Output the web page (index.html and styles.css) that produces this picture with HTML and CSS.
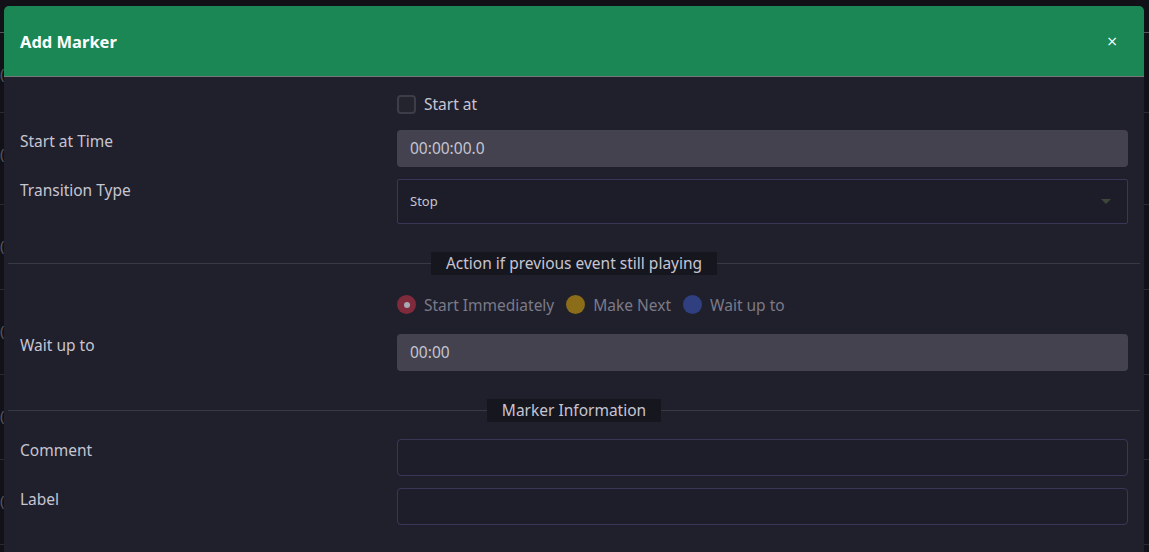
FILE: index.html
```html
<!DOCTYPE html>
<html lang="en">
<head>
<meta charset="utf-8">
<title>Add Marker</title>
<link rel="stylesheet" href="styles.css">
</head>
<body>
<div class="backdrop">
  <div class="bd-row bd-head"></div>
  <div class="bd-row"><span class="paren">(</span></div>
  <div class="bd-row tall"><span class="paren">(</span></div>
  <div class="bd-row"><span class="paren">(</span></div>
  <div class="bd-row"><span class="paren">(</span></div>
  <div class="bd-row"><span class="paren">(</span></div>
  <div class="bd-row"><span class="paren">(</span></div>
</div>

<div class="modal">
  <div class="modal-header">
    <h1 class="modal-title">Add Marker</h1>
    <button class="close">&times;</button>
  </div>
  <div class="modal-body">
    <div class="row row-check">
      <div></div>
      <label class="check"><span class="checkbox"></span><span>Start at</span></label>
    </div>
    <div class="row">
      <div class="label">Start at Time</div>
      <div class="input filled">00:00:00.0</div>
    </div>
    <div class="row">
      <div class="label">Transition Type</div>
      <div class="select">Stop<span class="caret"></span></div>
    </div>

    <div class="divider"><span class="legend">Action if previous event still playing</span></div>

    <div class="row row-radio">
      <div></div>
      <div class="radios">
        <span class="radio"><span class="dot red"><span class="inner"></span></span>Start Immediately</span>
        <span class="radio"><span class="dot yellow"></span>Make Next</span>
        <span class="radio"><span class="dot blue"></span>Wait up to</span>
      </div>
    </div>
    <div class="row">
      <div class="label">Wait up to</div>
      <div class="input filled">00:00</div>
    </div>

    <div class="divider tight"><span class="legend">Marker Information</span></div>

    <div class="row">
      <div class="label">Comment</div>
      <div class="input empty"></div>
    </div>
    <div class="row">
      <div class="label">Label</div>
      <div class="input empty"></div>
    </div>
  </div>
</div>
</body>
</html>
```
FILE: styles.css
```css
* { box-sizing: border-box; }
html, body { margin: 0; height: 100%; }
body {
  background: #111117;
  font-family: "Noto Sans", "Open Sans", sans-serif;
  color: #c6c5d2;
  overflow: hidden;
  position: relative;
}

.backdrop { display: flex; flex-direction: column; }
.bd-row {
  height: 85px;
  border-bottom: 1px solid #2a2a33;
  position: relative;
}
.bd-row.bd-head { height: 33px; border-bottom-color: #55555c; }
.bd-row.tall { height: 92px; }
.bd-row:nth-child(2) { height: 80px; }
.paren {
  position: absolute;
  left: 0;
  top: 30px;
  font-size: 15px;
  color: #55555f;
}

.modal {
  position: absolute;
  left: 4px;
  top: 6px;
  width: 1140px;
  height: 600px;
  background: #20202c;
  border-radius: 5px 5px 0 0;
}

.modal-header {
  height: 71px;
  background: #1a8754;
  border-bottom: 1px solid #76787a;
  border-radius: 5px 5px 0 0;
  display: flex;
  align-items: center;
  justify-content: space-between;
  padding: 0 16px 0 16px;
}
.modal-title {
  margin: 0;
  font-size: 16.5px;
  font-weight: 700;
  color: #ffffff;
}
.close {
  background: none;
  border: 0;
  color: #ffffff;
  font-size: 14px;
  font-family: "DejaVu Sans", sans-serif;
  padding: 0;
  margin-right: 10px;
  line-height: 1;
}

.modal-body { padding: 18px 16px 0 16px; }

.row {
  display: grid;
  grid-template-columns: 377px 1fr;
  margin-bottom: 12px;
}
.row-check { margin-bottom: 17px; }
.label {
  font-size: 15.5px;
  line-height: 22px;
  color: #c6c5d2;
}

.check {
  display: flex;
  align-items: center;
  gap: 8px;
  font-size: 15.5px;
  height: 18px;
  color: #c6c5d2;
}
.checkbox {
  width: 19px;
  height: 19px;
  border: 2px solid #3d3d49;
  border-radius: 4px;
  background: #24242f;
}

.input {
  height: 37px;
  border-radius: 4px;
  font-size: 15.5px;
  line-height: 37px;
  padding: 0 13px;
}
.input.filled { background: #43424e; color: #c6c5d2; }
.input.empty { background: #1e1e2a; border: 1px solid #393758; }

.select {
  height: 45px;
  background: #1d1d29;
  border: 1px solid #393758;
  border-radius: 2px;
  font-size: 13px;
  line-height: 43px;
  padding: 0 12px;
  display: flex;
  justify-content: space-between;
  align-items: center;
  color: #c6c5d2;
}
.caret {
  width: 0;
  height: 0;
  border-left: 5px solid transparent;
  border-right: 5px solid transparent;
  border-top: 5px solid #3e4639;
  margin-right: 4px;
}

.divider {
  display: flex;
  align-items: center;
  margin: 28px -12px 20px -12px;
}
.divider.tight { margin-bottom: 17px; }
.divider::before, .divider::after {
  content: "";
  flex: 1;
  height: 1px;
  background: #393944;
}
.legend {
  background: #16161f;
  font-size: 15.5px;
  line-height: 23px;
  padding: 0 15px;
  color: #c6c5d2;
}

.row-radio { margin-bottom: 20px; }
.radios {
  display: flex;
  align-items: center;
  gap: 12px;
  height: 19px;
  font-size: 15.5px;
  color: #7b7a88;
}
.radio { display: flex; align-items: center; gap: 8px; }
.dot {
  width: 19px;
  height: 19px;
  border-radius: 50%;
  display: flex;
  align-items: center;
  justify-content: center;
}
.dot.red { background: #7f2b3b; }
.dot.yellow { background: #8b6c18; }
.dot.blue { background: #2f3f80; }
.inner {
  width: 6px;
  height: 6px;
  border-radius: 50%;
  background: #a9a9b3;
}
```
